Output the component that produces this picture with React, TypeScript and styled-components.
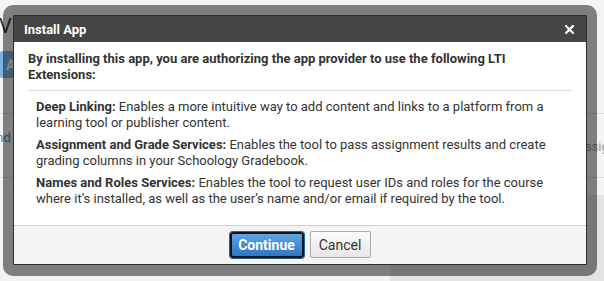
import React from "react";
import styled, { createGlobalStyle } from "styled-components";

const GlobalStyle = createGlobalStyle`
  html, body {
    margin: 0;
    padding: 0;
    width: 604px;
    height: 281px;
    overflow: hidden;
    background: #f4f4f4;
    font-family: Roboto, "Liberation Sans", Arial, sans-serif;
  }
  * { box-sizing: border-box; }
`;

const Page = styled.div`
  position: relative;
  width: 604px;
  height: 281px;
  overflow: hidden;
  display: flex;
  flex-direction: column;
`;

const PageTitle = styled.h1`
  margin: 0 0 0 -1px;
  height: 46px;
  padding-top: 14px;
  font-size: 20px;
  font-weight: 400;
  color: #333;
`;

const Toolbar = styled.div`
  height: 67px;
  display: flex;
  align-items: flex-start;
  padding-top: 5px;
`;

const AddButton = styled.span`
  display: inline-flex;
  align-items: center;
  height: 27px;
  padding: 0 12px 0 6px;
  background: #7bb0e2;
  color: #fff;
  font-weight: 700;
  font-size: 14px;
  border-radius: 2px;
`;

const TableRow = styled.div`
  height: 65px;
  border-top: 1px solid #dcdcdc;
  border-bottom: 1px solid #dcdcdc;
  display: flex;
  justify-content: space-between;
  align-items: flex-start;
  padding-top: 16px;
  font-size: 13px;
`;

const LinkCell = styled.span`
  margin-left: -14px;
  color: #5a86b4;
`;

const MutedCell = styled.span`
  margin-top: 9px;
  margin-right: -12px;
  color: #999;
`;

const Lower = styled.div`
  flex: 1;
  display: flex;
  margin-top: 17px;
`;

const LowerPart = styled.div<{ $shade: string; $grow: number }>`
  flex: ${(p) => p.$grow};
  background: ${(p) => p.$shade};
`;

const Backdrop = styled.div`
  position: absolute;
  left: 3px;
  top: 5px;
  width: 594px;
  height: 271px;
  padding: 10px;
  border-radius: 10px;
  background: rgba(0, 0, 0, 0.48);
`;

const Dialog = styled.div`
  width: 574px;
  height: 250px;
  border: 1px solid #2e2e2e;
  background: #fff;
  display: flex;
  flex-direction: column;
  color: #333;
`;

const TitleBar = styled.div`
  height: 26px;
  flex-shrink: 0;
  background: #454545;
  display: flex;
  align-items: center;
  justify-content: space-between;
  padding: 0 12px 0 10px;
  color: #fff;
  font-size: 13px;
  font-weight: 700;
`;

const CloseIcon = styled.svg`
  width: 9px;
  height: 9px;
  display: block;
`;

const Body = styled.div`
  flex: 1;
  padding: 9px 14px 0 14px;
  font-size: 13px;
  line-height: 16px;
`;

const Intro = styled.p`
  margin: 0;
  font-weight: 700;
  padding-bottom: 7px;
  border-bottom: 1px solid #dedede;
`;

const ServiceList = styled.div`
  padding: 8px 0 0 8px;
  display: flex;
  flex-direction: column;
  gap: 6px;
`;

const Service = styled.p`
  margin: 0;
  b {
    font-weight: 700;
  }
`;

const Footer = styled.div`
  height: 39px;
  flex-shrink: 0;
  border-top: 1px solid #cfcfcf;
  background: #f4f4f4;
  display: flex;
  justify-content: center;
  align-items: flex-start;
  gap: 6px;
  padding-top: 5px;
`;

const Button = styled.button<{ $primary?: boolean }>`
  height: 27px;
  font-family: inherit;
  font-size: 14px;
  line-height: 1;
  border-radius: 3px;
  cursor: pointer;
  ${(p) =>
    p.$primary
      ? `
    width: 74px;
    margin-top: 1px;
    height: 26px;
    font-weight: 700;
    color: #fff;
    border: 2px solid #0c1620;
    box-shadow: 0 0 0 1px #2f5f8c;
    background: linear-gradient(#5ea3e3, #2f77c2);
  `
      : `
    width: 61px;
    color: #333;
    border: 1px solid #a9a9a9;
    border-radius: 2px;
    background: linear-gradient(#fbfbfb, #e7e7e7);
  `}
`;

const services = [
  {
    name: "Deep Linking:",
    text: "Enables a more intuitive way to add content and links to a platform from a learning tool or publisher content.",
  },
  {
    name: "Assignment and Grade Services:",
    text: "Enables the tool to pass assignment results and create grading columns in your Schoology Gradebook.",
  },
  {
    name: "Names and Roles Services:",
    text: "Enables the tool to request user IDs and roles for the course where it\u2019s installed, as well as the user\u2019s name and/or email if required by the tool.",
  },
];

const App = () => {
  return (
    <Page>
      <GlobalStyle />
      <PageTitle>View Tools</PageTitle>
      <Toolbar>
        <AddButton>Add</AddButton>
      </Toolbar>
      <TableRow>
        <LinkCell>Find</LinkCell>
        <MutedCell>Assign</MutedCell>
      </TableRow>
      <Lower>
        <LowerPart $shade="#f2f2f2" $grow={390} />
        <LowerPart $shade="#e4e4e4" $grow={214} />
      </Lower>
      <Backdrop>
        <Dialog>
          <TitleBar>
            <span>Install App</span>
            <CloseIcon viewBox="0 0 9 9">
              <path
                d="M1 1 L8 8 M8 1 L1 8"
                stroke="#fff"
                strokeWidth="2.2"
                strokeLinecap="square"
              />
            </CloseIcon>
          </TitleBar>
          <Body>
            <Intro>
              By installing this app, you are authorizing the app provider to
              use the following LTI Extensions:
            </Intro>
            <ServiceList>
              {services.map((s) => (
                <Service key={s.name}>
                  <b>{s.name}</b> {s.text}
                </Service>
              ))}
            </ServiceList>
          </Body>
          <Footer>
            <Button $primary>Continue</Button>
            <Button>Cancel</Button>
          </Footer>
        </Dialog>
      </Backdrop>
    </Page>
  );
};

export default App;
